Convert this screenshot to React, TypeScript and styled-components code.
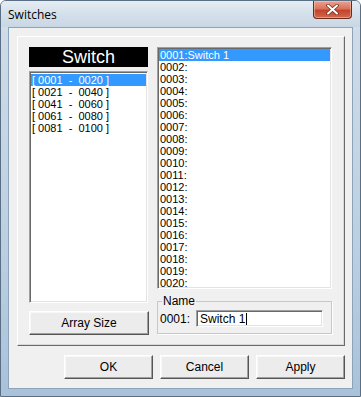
import React from "react";
import styled, { createGlobalStyle } from "styled-components";

const GlobalStyle = createGlobalStyle`
  html, body {
    margin: 0;
    padding: 0;
    background: #ffffff;
  }
`;

const UI_FONT = `"Liberation Sans", Arial, sans-serif`;

const Window = styled.div`
  width: 361px;
  height: 397px;
  box-sizing: border-box;
  display: flex;
  flex-direction: column;
  border: 1px solid #5a6f84;
  border-radius: 6px 6px 0 0;
  background: linear-gradient(180deg, #e3ebf2 0%, #cfdbe7 8%, #bcd0e2 60%, #a9c2d9 100%);
  overflow: hidden;
`;

const TitleBar = styled.div`
  height: 26px;
  display: flex;
  align-items: flex-start;
  background: linear-gradient(180deg, #e6edf3 0%, #d5e1eb 45%, #c9d7e5 100%);
`;

const Title = styled.div`
  flex: 1;
  padding: 5px 0 0 7px;
  font-family: "Open Sans", "Noto Sans", sans-serif;
  font-size: 12px;
  color: #000;
`;

const CloseButton = styled.div`
  width: 39px;
  height: 18px;
  margin-right: 8px;
  box-sizing: border-box;
  display: flex;
  align-items: center;
  justify-content: center;
  border: 1px solid #6b2a1e;
  border-top: none;
  border-radius: 0 0 4px 4px;
  background: linear-gradient(180deg, #e8a391 0%, #d9735c 45%, #c4442b 55%, #cf6a4d 100%);
  box-shadow: inset 0 0 0 1px rgba(255, 220, 200, 0.45);
`;

const FrameBody = styled.div`
  flex: 1;
  display: flex;
  padding: 0 7px 7px 7px;
`;

const Client = styled.div`
  flex: 1;
  display: flex;
  flex-direction: column;
  gap: 9px;
  padding: 8px 7px 0 8px;
  background: #f0f0f0;
  border: 1px solid #8da3b9;
`;

const Panel = styled.div`
  width: 328px;
  height: 310px;
  box-sizing: border-box;
  display: flex;
  gap: 9px;
  padding: 10px 0 0 11px;
  border-top: 1px solid #ffffff;
  border-left: 1px solid #ffffff;
  border-right: 1px solid #6a6a6a;
  border-bottom: 1px solid #6a6a6a;
  box-shadow: inset -1px -1px 0 #d8d8d8;
`;

const Column = styled.div<{ $width: number }>`
  width: ${(p) => p.$width}px;
  display: flex;
  flex-direction: column;
`;

const Header = styled.div`
  height: 20px;
  background: #000;
  color: #fff;
  font-family: "Liberation Sans", Arial, sans-serif;
  font-size: 18px;
  line-height: 20px;
  text-align: center;
  margin-bottom: 4px;
`;

const ListBox = styled.div<{ $height: number; $padTop: number }>`
  height: ${(p) => p.$height}px;
  box-sizing: border-box;
  background: #fff;
  border-top: 1px solid #a0a0a0;
  border-left: 1px solid #a0a0a0;
  border-right: 1px solid #ffffff;
  border-bottom: 1px solid #ffffff;
  box-shadow: inset 1px 1px 0 #696969, inset -1px -1px 0 #e3e3e3;
  padding: ${(p) => p.$padTop + 1}px 1px 0 1px;
  overflow: hidden;
`;

const ListItem = styled.div<{ $selected?: boolean }>`
  height: 12px;
  line-height: 12px;
  padding-left: 1px;
  font-family: ${UI_FONT};
  font-size: 11px;
  white-space: pre;
  color: ${(p) => (p.$selected ? "#ffffff" : "#000000")};
  background: ${(p) => (p.$selected ? "#3399ff" : "transparent")};
`;

const Spacer = styled.div<{ $size: number }>`
  height: ${(p) => p.$size}px;
  flex-shrink: 0;
`;

const Button = styled.div<{ $width: number }>`
  width: ${(p) => p.$width}px;
  height: 24px;
  box-sizing: border-box;
  display: flex;
  align-items: center;
  justify-content: center;
  font-family: ${UI_FONT};
  font-size: 12px;
  color: #000;
  background: #ececec;
  border-top: 1px solid #ffffff;
  border-left: 1px solid #ffffff;
  border-right: 1px solid #555555;
  border-bottom: 1px solid #555555;
  box-shadow: inset -1px -1px 0 #a0a0a0, inset 1px 1px 0 #f8f8f8;
`;

const GroupBox = styled.fieldset`
  margin: 6px 0 0 0;
  padding: 3px 0 5px 2px;
  height: 39px;
  box-sizing: border-box;
  border: 1px solid #c8c8c8;
  box-shadow: 1px 1px 0 #ffffff;
  display: flex;
  align-items: center;
`;

const Legend = styled.legend`
  padding: 0 1px;
  margin-left: 2px;
  font-family: ${UI_FONT};
  font-size: 12px;
  line-height: 12px;
`;

const FieldLabel = styled.span`
  width: 36px;
  font-family: ${UI_FONT};
  font-size: 12px;
`;

const TextField = styled.div`
  width: 127px;
  height: 17px;
  box-sizing: border-box;
  display: flex;
  align-items: center;
  padding-left: 3px;
  background: #fff;
  font-family: ${UI_FONT};
  font-size: 12px;
  border-top: 1px solid #a0a0a0;
  border-left: 1px solid #a0a0a0;
  border-right: 1px solid #ffffff;
  border-bottom: 1px solid #ffffff;
  box-shadow: inset 1px 1px 0 #696969, inset -1px -1px 0 #e3e3e3;
`;

const Caret = styled.span`
  display: inline-block;
  width: 1px;
  height: 12px;
  margin-left: 1px;
  background: #000;
`;

const ButtonRow = styled.div`
  width: 328px;
  display: flex;
  justify-content: flex-end;
  gap: 7px;
`;

const ranges = ["0001  -  0020", "0021  -  0040", "0041  -  0060", "0061  -  0080", "0081  -  0100"];

const switches = Array.from({ length: 20 }, (_, i) => {
  const n = String(i + 1).padStart(4, "0");
  return i === 0 ? `${n}:Switch 1` : `${n}:`;
});

export default function App() {
  return (
    <>
      <GlobalStyle />
      <Window>
        <TitleBar>
          <Title>Switches</Title>
          <CloseButton>
            <svg width="13" height="11" viewBox="0 0 13 11">
              <path d="M2 1.5 L11 9.5 M11 1.5 L2 9.5" stroke="#7a2a1a" strokeWidth="3.6" strokeLinecap="round" />
              <path d="M2 1.5 L11 9.5 M11 1.5 L2 9.5" stroke="#ffffff" strokeWidth="2" strokeLinecap="round" />
            </svg>
          </CloseButton>
        </TitleBar>
        <FrameBody>
          <Client>
            <Panel>
              <Column $width={119}>
                <Header>Switch</Header>
                <ListBox $height={232} $padTop={1}>
                  {ranges.map((r, i) => (
                    <ListItem key={r} $selected={i === 0}>{`[ ${r} ]`}</ListItem>
                  ))}
                </ListBox>
                <Spacer $size={8} />
                <Button $width={120}>Array Size</Button>
              </Column>
              <Column $width={175}>
                <ListBox $height={242} $padTop={0}>
                  {switches.map((s, i) => (
                    <ListItem key={s} $selected={i === 0}>{s}</ListItem>
                  ))}
                </ListBox>
                <GroupBox>
                  <Legend>Name</Legend>
                  <FieldLabel>0001:</FieldLabel>
                  <TextField>
                    Switch 1<Caret />
                  </TextField>
                </GroupBox>
              </Column>
            </Panel>
            <ButtonRow>
              <Button $width={89}>OK</Button>
              <Button $width={89}>Cancel</Button>
              <Button $width={89}>Apply</Button>
            </ButtonRow>
          </Client>
        </FrameBody>
      </Window>
    </>
  );
}
